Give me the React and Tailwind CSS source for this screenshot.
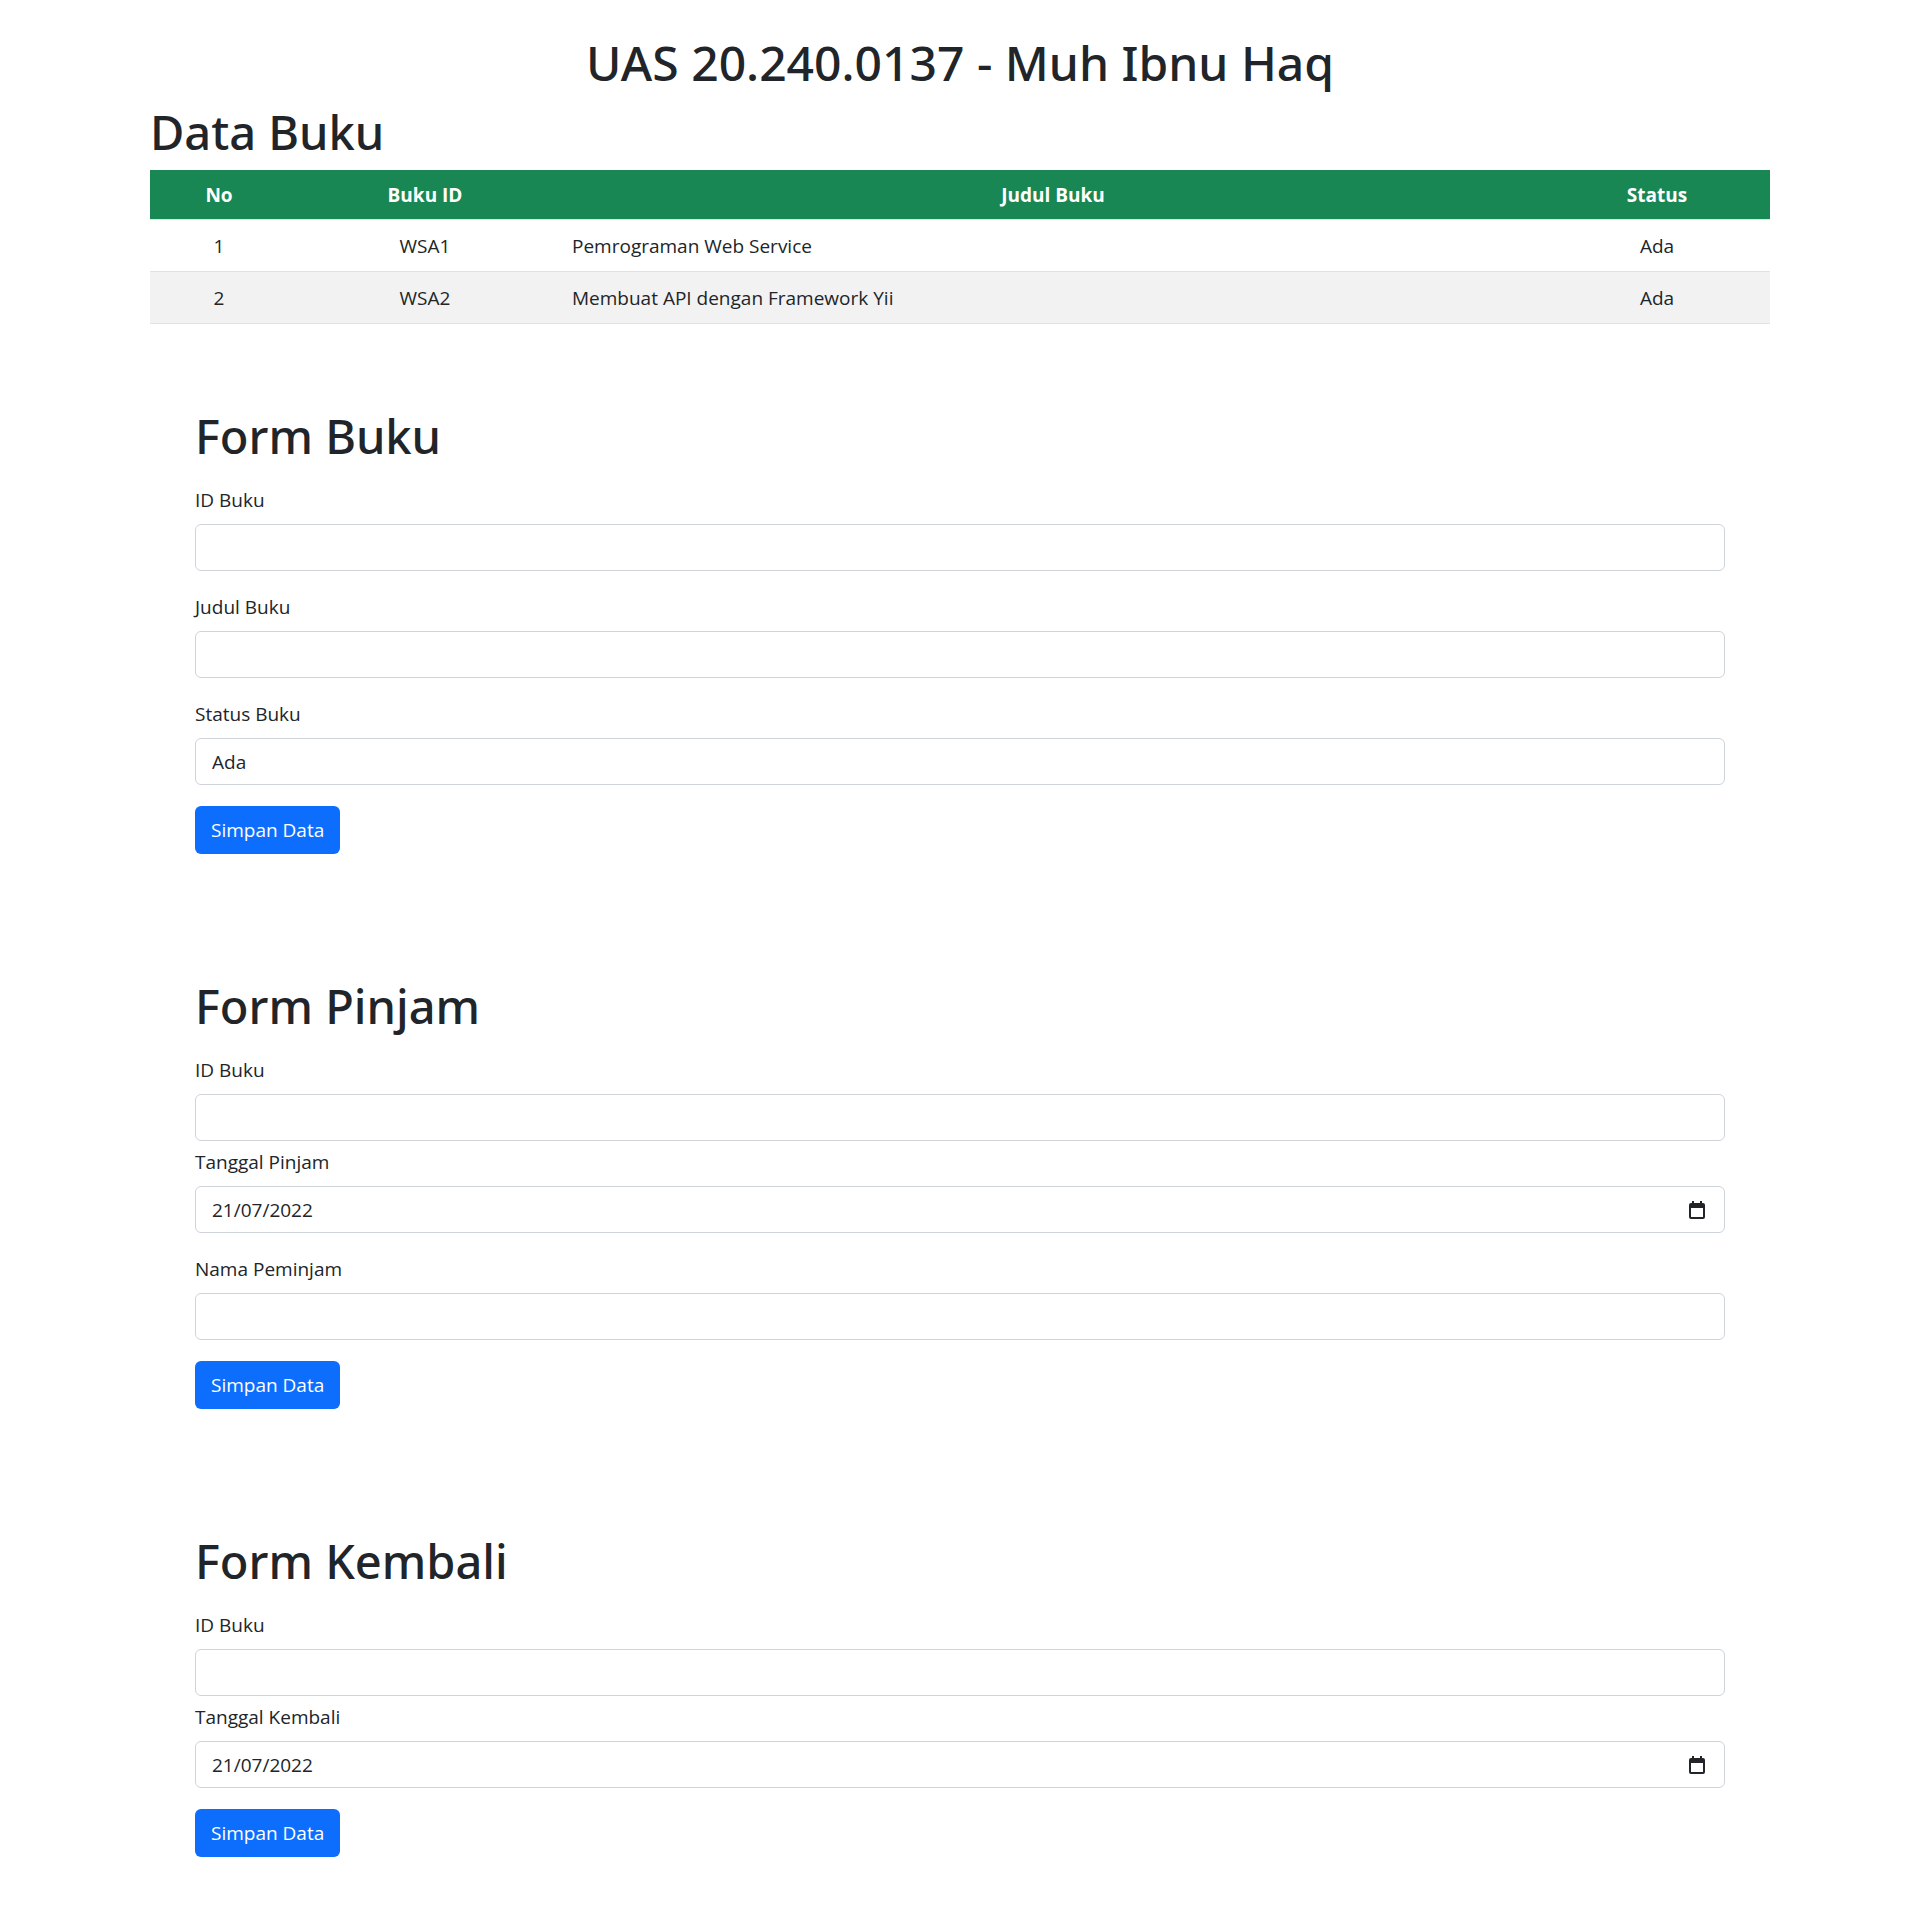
import React from "react";

// data for the book table
const books = [
  { no: 1, id: "WSA1", judul: "Pemrograman Web Service", status: "Ada" },
  { no: 2, id: "WSA2", judul: "Membuat API dengan Framework Yii", status: "Ada" },
];

function CalendarIcon() {
  return (
    <svg width="16" height="18" viewBox="0 0 16 18" className="text-[#212529]">
      <rect x="3" y="0" width="2" height="3" fill="currentColor" />
      <rect x="11" y="0" width="2" height="3" fill="currentColor" />
      <path
        fillRule="evenodd"
        fill="currentColor"
        d="M2 2h12a2 2 0 0 1 2 2v12a2 2 0 0 1-2 2H2a2 2 0 0 1-2-2V4a2 2 0 0 1 2-2zM2 7v9h12V7z"
      />
    </svg>
  );
}

function Field({ label, value, date, tight }) {
  return (
    <div className={tight ? "mb-[6px]" : "mb-[21px]"}>
      <label className="block leading-[30px] mb-[9px]">{label}</label>
      <div className="relative">
        <input
          type="text"
          defaultValue={value}
          className="block w-full h-[47px] px-[16px] border border-[#ced4da] rounded-[6px] bg-white text-[19px] text-[#212529] outline-none"
        />
        {date && (
          <div className="absolute right-[20px] top-[15px] pointer-events-none">
            <CalendarIcon />
          </div>
        )}
      </div>
    </div>
  );
}

function SubmitButton() {
  return (
    <button
      type="button"
      className="h-[48px] px-[16px] bg-[#0d6efd] text-white rounded-[6px] leading-[30px]"
    >
      Simpan Data
    </button>
  );
}

function FormSection({ title, children, className }) {
  return (
    <section className={"mx-[45px] " + className}>
      <h1 className="text-[47px] leading-[60px] font-medium font-['Noto_Sans',sans-serif] mb-[19px]">
        {title}
      </h1>
      {children}
      <SubmitButton />
    </section>
  );
}

export default function App() {
  return (
    <div className="bg-white text-[#212529] text-[19px] leading-[30px] font-['Open_Sans',sans-serif] pb-[61px]">
      <div className="w-[1620px] mx-auto pt-[33px]">
        <h1 className="text-[48px] leading-[60px] font-medium font-['Noto_Sans',sans-serif] text-center mb-[9px]">
          UAS 20.240.0137 - Muh Ibnu Haq
        </h1>
        <h1 className="text-[47px] leading-[60px] font-medium font-['Noto_Sans',sans-serif] mb-[8px]">
          Data Buku
        </h1>

        {/* tabel data buku */}
        <div>
          <div className="grid grid-cols-[138px_274px_982px_226px] h-[50px] bg-[#198754] text-white font-bold border-b border-[#dee2e6] items-center">
            <div className="text-center">No</div>
            <div className="text-center">Buku ID</div>
            <div className="text-center">Judul Buku</div>
            <div className="text-center">Status</div>
          </div>
          {books.map((b, i) => (
            <div
              key={b.id}
              className={
                "grid grid-cols-[138px_274px_982px_226px] h-[52px] items-center border-b border-[#dee2e6] " +
                (i % 2 === 1 ? "bg-[#f2f2f2]" : "bg-white")
              }
            >
              <div className="text-center">{b.no}</div>
              <div className="text-center">{b.id}</div>
              <div className="pl-[10px]">{b.judul}</div>
              <div className="text-center">{b.status}</div>
            </div>
          ))}
        </div>

        <FormSection title="Form Buku" className="mt-[82px]">
          <Field label="ID Buku" />
          <Field label="Judul Buku" />
          <Field label="Status Buku" value="Ada" />
        </FormSection>

        <FormSection title="Form Pinjam" className="mt-[122px]">
          <Field label="ID Buku" tight />
          <Field label="Tanggal Pinjam" value="21/07/2022" date />
          <Field label="Nama Peminjam" />
        </FormSection>

        <FormSection title="Form Kembali" className="mt-[122px]">
          <Field label="ID Buku" tight />
          <Field label="Tanggal Kembali" value="21/07/2022" date />
        </FormSection>
      </div>
    </div>
  );
}
